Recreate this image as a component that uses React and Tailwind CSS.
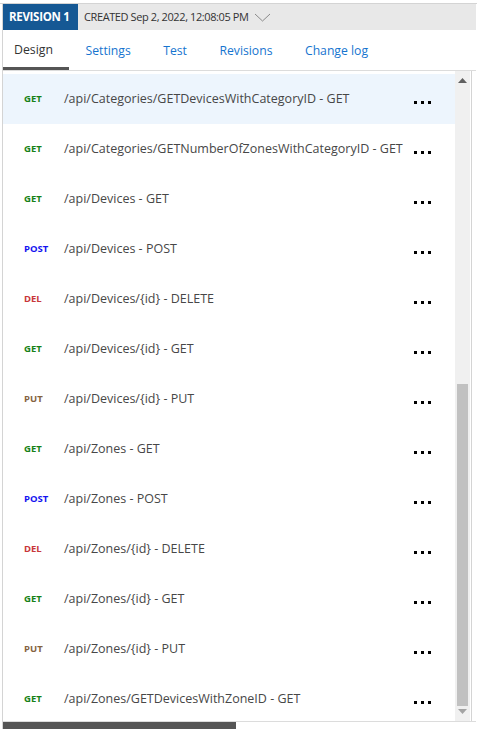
import React from "react";

const routes = [
  { m: "GET", path: "/api/Categories/GETDevicesWithCategoryID - GET", active: true },
  { m: "GET", path: "/api/Categories/GETNumberOfZonesWithCategoryID - GET" },
  { m: "GET", path: "/api/Devices - GET" },
  { m: "POST", path: "/api/Devices - POST" },
  { m: "DEL", path: "/api/Devices/{id} - DELETE" },
  { m: "GET", path: "/api/Devices/{id} - GET" },
  { m: "PUT", path: "/api/Devices/{id} - PUT" },
  { m: "GET", path: "/api/Zones - GET" },
  { m: "POST", path: "/api/Zones - POST" },
  { m: "DEL", path: "/api/Zones/{id} - DELETE" },
  { m: "GET", path: "/api/Zones/{id} - GET" },
  { m: "PUT", path: "/api/Zones/{id} - PUT" },
  { m: "GET", path: "/api/Zones/GETDevicesWithZoneID - GET" },
];

const methodColor = {
  GET: "text-[#178217]",
  POST: "text-[#1414f0]",
  DEL: "text-[#c8373a]",
  PUT: "text-[#85633f]",
};

const tabs = ["Design", "Settings", "Test", "Revisions", "Change log"];

const Dots = () => (
  <div className="flex gap-[4px] mt-[7px]">
    <span className="w-[3px] h-[3px] bg-black"></span>
    <span className="w-[3px] h-[3px] bg-black"></span>
    <span className="w-[3px] h-[3px] bg-black"></span>
  </div>
);

const App = () => {
  return (
    <div className="w-[477px] h-[729px] overflow-hidden bg-white font-['Segoe_UI','Open_Sans',sans-serif]">
      <div className="mt-[3px] border-t border-[#d4d4d4]">
        <div className="ml-[2px] border-l border-[#d4d4d4] w-[474px]">
          {/* revision header */}
          <div className="h-[26px] bg-[#e8e8e8] flex items-center">
            <div className="h-full w-[75px] bg-[#155894] text-white text-[11.5px] font-bold flex items-center pl-[6px] tracking-[-0.3px]">
              REVISION 1
            </div>
            <span className="ml-[6px] text-[11px] text-[#333] tracking-[-0.4px]">
              CREATED Sep 2, 2022, 12:08:05 PM
            </span>
            <svg width="17" height="9" viewBox="0 0 17 9" className="ml-[5px]">
              <path d="M1 1 L8.5 8 L16 1" fill="none" stroke="#8a8a8a" strokeWidth="1" />
            </svg>
          </div>

          {/* tabs */}
          <div className="h-[41px] flex items-stretch border-b border-[#dcdcdc]">
            {tabs.map((t, i) => (
              <div
                key={t}
                className={
                  i === 0
                    ? "flex items-center pl-[11px] pr-[16px] border-b-[3px] border-[#555] pt-[4px] text-[12.3px] text-[#333]"
                    : "flex items-center pl-[16.5px] pr-[16px] pt-[2px] text-[12.2px] text-[#1674cf]"
                }
              >
                {t}
              </div>
            ))}
          </div>

          {/* list viewport */}
          <div className="h-[650px] flex pt-[3px]">
            <div className="w-[452px] overflow-hidden">
              {routes.map((r) => (
                <div
                  key={r.path}
                  className={
                    "h-[50px] shrink-0 flex items-center pl-[21px] " +
                    (r.active ? "bg-[#edf5fd]" : "")
                  }
                >
                  <span className={"w-[40px] text-[9.5px] font-bold " + methodColor[r.m]}>
                    {r.m}
                  </span>
                  <span className="flex-1 text-[12.5px] text-[#474747] whitespace-nowrap">
                    {r.path}
                  </span>
                  <div className="w-[50px] pl-[9px]">
                    <Dots />
                  </div>
                </div>
              ))}
            </div>
            {/* vertical scrollbar */}
            <div className="w-[15px] -mt-[3px] bg-[#f0f0f0] flex flex-col items-center">
              <svg width="9" height="5" viewBox="0 0 9 5" className="mt-[7px]">
                <path d="M0 5 L4.5 0 L9 5 Z" fill="#606060" />
              </svg>
              <div className="flex-1 w-full px-[2px] pt-[301px] pb-[3px]">
                <div className="h-full bg-[#c1c1c1]"></div>
              </div>
              <svg width="9" height="5" viewBox="0 0 9 5" className="mb-[7px]">
                <path d="M0 0 L4.5 5 L9 0 Z" fill="#a3a3a3" />
              </svg>
            </div>
            <div className="w-[2px] -mt-[3px] border-r border-[#d4d4d4]"></div>
          </div>

          {/* horizontal scrollbar */}
          <div className="border-t border-[#dcdcdc] h-[8px]">
            <div className="w-[233px] h-full bg-[#555]"></div>
          </div>
        </div>
      </div>
    </div>
  );
};

export default App;
